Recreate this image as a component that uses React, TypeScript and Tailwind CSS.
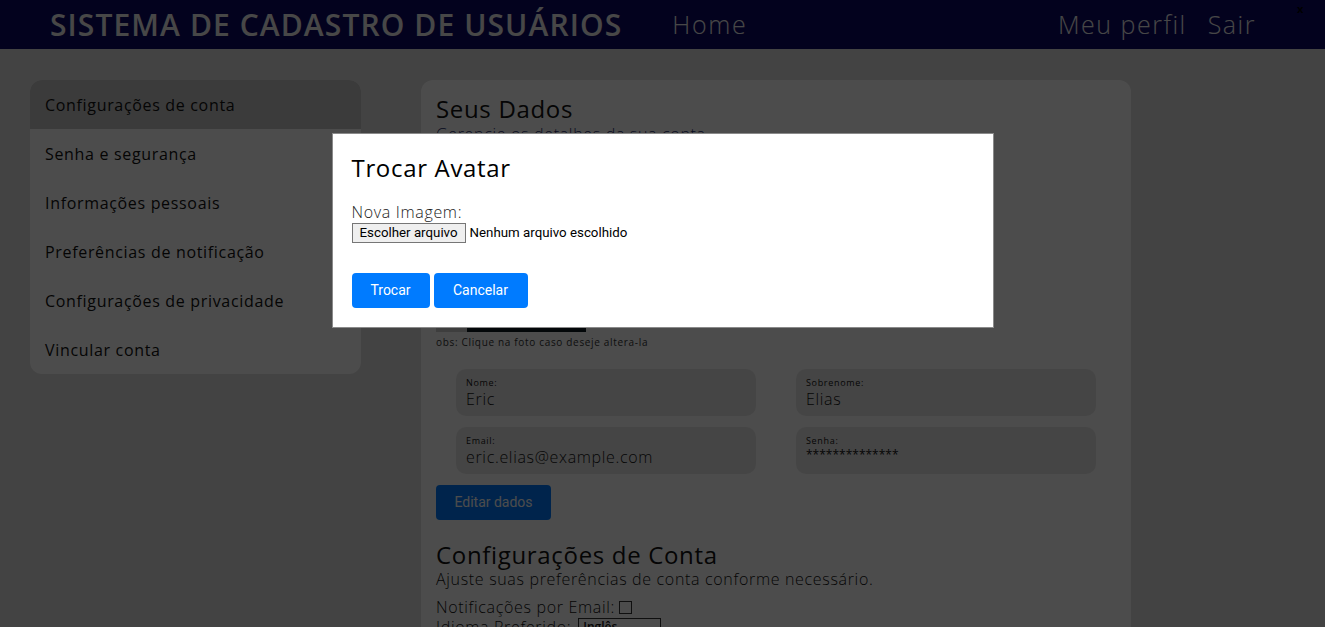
import React from "react";

const mont = { fontFamily: '"Open Sans", "Noto Sans", sans-serif', letterSpacing: "0.042em" };

function Field({ label, value, small }: { label: string; value: string; small?: boolean }) {
  return (
    <div className="h-[47px] rounded-[10px] bg-[#e8e8e8] px-[10px] pt-[8px]">
      <div className="text-[9px] leading-[11px] text-[#111]">{label}</div>
      <div
        className={
          small
            ? "mt-[1px] text-[12px] leading-[16px] tracking-normal text-[#111]"
            : "text-[16px] leading-[22px] font-light text-[#111]"
        }
      >
        {value}
      </div>
    </div>
  );
}

export default function App() {
  const items = [
    "Configurações de conta",
    "Senha e segurança",
    "Informações pessoais",
    "Preferências de notificação",
    "Configurações de privacidade",
    "Vincular conta",
  ];
  return (
    <div className="relative min-h-[627px] w-[1325px] bg-[#e0e0e0] text-[#111]" style={mont}>
      <header className="flex h-[49px] items-center bg-[#0b0865] pl-[50px] pr-[69px] text-[#efefef]">
        <div className="text-[30px] font-semibold tracking-[1.1px] leading-none">SISTEMA DE CADASTRO DE USUÁRIOS</div>
        <div className="ml-[50px] text-[25px] font-light tracking-[1.7px] leading-none">Home</div>
        <div className="ml-auto text-[25px] font-light tracking-[1.5px] leading-none">Meu perfil</div>
        <div className="ml-[21px] text-[25px] font-light tracking-[1.5px] leading-none">Sair</div>
      </header>

      <div className="flex items-start pt-[31px]">
        <nav className="ml-[30px] w-[331px] overflow-hidden rounded-[12px] bg-white">
          {items.map((t, i) => (
            <div key={t} className={"flex h-[49px] items-center px-[15px] text-[16px] " + (i === 0 ? "bg-[#c6c6c6]" : "")}>
              {t}
            </div>
          ))}
        </nav>

        <main className="ml-[60px] w-[710px] rounded-[12px] bg-white px-[15px] pt-[14px] pb-[40px]">
          <h2 className="text-[24px] leading-[30px]">Seus Dados</h2>
          <p className="text-[16px] leading-[20px] font-light text-[#1a2a6a]">Gerencie os detalhes da sua conta</p>
          <div className="mt-[18px] flex h-[170px] w-[150px] items-end">
            <div className="h-full w-[31px] bg-[#cfcfcf]" />
            <div className="h-full flex-1 bg-[#0b1820]" />
          </div>
          <p className="mt-[3px] text-[10px] leading-[14px] text-[#333]">obs: Clique na foto caso deseje altera-la</p>
          <div className="mt-[20px] grid grid-cols-[300px_300px] gap-x-[40px] gap-y-[11px] pl-[20px]">
            <Field label="Nome:" value="Eric" />
            <Field label="Sobrenome:" value="Elias" />
            <Field label="Email:" value="eric.elias@example.com" />
            <Field label="Senha:" value="**************" small />
          </div>
          <button
            className="mt-[11px] h-[35px] w-[115px] rounded-[4px] bg-[#007bff] text-[14px] tracking-normal text-white"
            style={{ fontFamily: "Roboto, sans-serif" }}
          >
            Editar dados
          </button>
          <h2 className="mt-[21px] text-[24px] leading-[28px]">Configurações de Conta</h2>
          <p className="text-[16px] leading-[20px] font-light">Ajuste suas preferências de conta conforme necessário.</p>
          <div className="mt-[8px] flex items-center text-[16px] leading-[20px] font-light">
            Notificações por Email:
            <span className="ml-[4px] inline-block h-[13px] w-[13px] border border-[#333] bg-white" />
          </div>
          <div className="flex items-center text-[16px] leading-[20px] font-light">
            Idioma Preferido:
            <span className="ml-[7px] inline-flex h-[19px] w-[83px] items-center justify-between border border-[#333] px-[4px] text-[12px] font-semibold tracking-normal">
              Inglês <span className="text-[9px]">⌄</span>
            </span>
          </div>
          <div className="h-[200px]" />
        </main>
      </div>

      <div className="fixed inset-0 bg-black/70" />

      <div className="fixed right-[22px] top-[3px] text-[11px] font-bold leading-none tracking-normal text-black">x</div>

      <div className="fixed inset-0 flex justify-center pt-[133px]">
        <div className="h-[195px] w-[662px] border border-[#8a8a8a] bg-white px-[19px] pt-[17px]">
          <h3 className="text-[24px] leading-[34px] text-black">Trocar Avatar</h3>
          <div className="mt-[18px] text-[16px] leading-[18px] font-light text-[#222]">Nova Imagem:</div>
          <div className="mt-[2px] flex items-center tracking-normal" style={{ fontFamily: "Roboto, Arial, sans-serif" }}>
            <span className="inline-flex h-[20px] items-center border border-[#767676] bg-[#efefef] px-[7px] text-[13.3px] text-black">
              Escolher arquivo
            </span>
            <span className="ml-[4px] text-[13.3px] text-black">Nenhum arquivo escolhido</span>
          </div>
          <div className="mt-[30px] flex gap-[4px] tracking-normal" style={{ fontFamily: "Roboto, sans-serif" }}>
            <button className="h-[35px] w-[78px] rounded-[4px] bg-[#007bff] text-[14px] text-white">Trocar</button>
            <button className="h-[35px] w-[94px] rounded-[4px] bg-[#007bff] text-[14px] text-white">Cancelar</button>
          </div>
        </div>
      </div>
    </div>
  );
}
